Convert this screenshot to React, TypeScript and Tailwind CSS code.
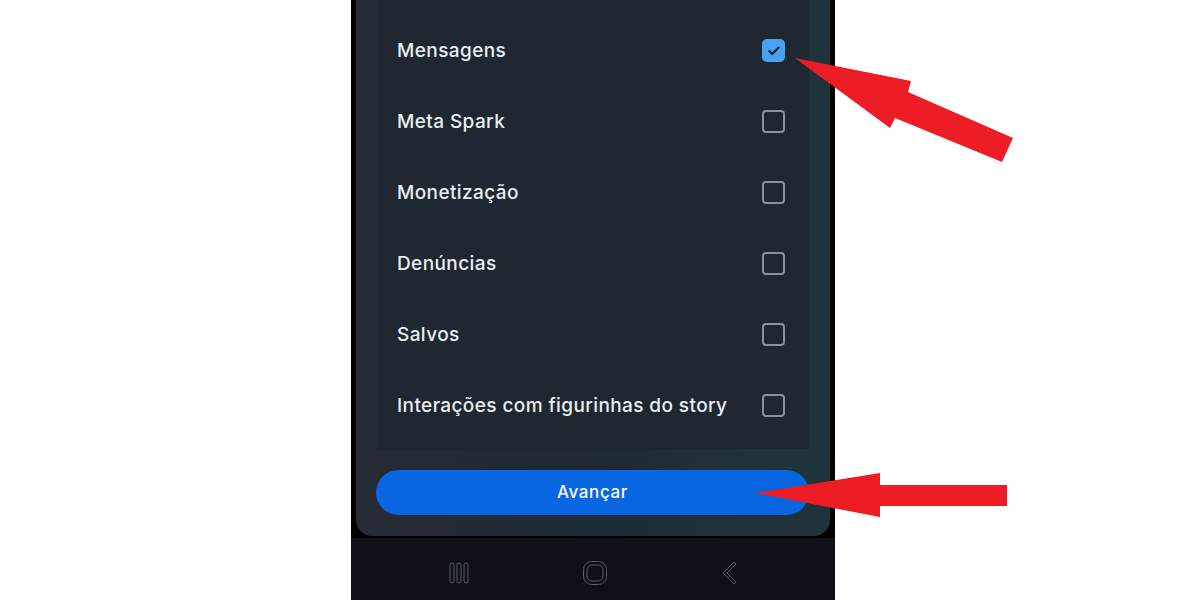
import { Check } from 'lucide-react'

const items = [
  { label: 'Mensagens', checked: true },
  { label: 'Meta Spark', checked: false },
  { label: 'Monetização', checked: false },
  { label: 'Denúncias', checked: false },
  { label: 'Salvos', checked: false },
  { label: 'Interações com figurinhas do story', checked: false },
]

function Checkbox({ checked }: { checked: boolean }) {
  if (checked) {
    return (
      <div className="w-[23px] h-[23px] rounded-[5px] bg-[#47a2f2] flex items-center justify-center">
        <Check className="w-[14px] h-[14px] text-[#16222e]" strokeWidth={3.5} />
      </div>
    )
  }
  return <div className="w-[23px] h-[23px] rounded-[4px] border-2 border-[#8b9197]" />
}

export default function App() {
  return (
    <div className="relative w-[1200px] h-[600px] bg-white overflow-hidden font-['Inter','Liberation_Sans',sans-serif]">
      <div className="ml-[351px] w-[484px] h-full bg-black flex flex-col">
        {/* cartão */}
        <div className="mx-[5px] h-[536px] rounded-b-[16px] bg-gradient-to-r from-[#262b34] via-[#1f2b36] to-[#20333a] px-[20px] flex flex-col">
          <div className="mx-[1px] h-[449px] bg-[#1f2831] pt-[15px]">
            {items.map((item) => (
              <div key={item.label} className="h-[71px] flex items-center justify-between pl-[20px] pr-[24px]">
                <span className="text-[19px] font-medium text-[#e9eef3] tracking-[0.4px] pt-[1px]">{item.label}</span>
                <Checkbox checked={item.checked} />
              </div>
            ))}
          </div>
          <button className="mt-[21px] h-[45px] w-[433px] rounded-full bg-[#0866e2] text-white text-[17px] font-medium tracking-[0.6px] pt-[1px]">
            Avançar
          </button>
        </div>

        {/* barra de navegação */}
        <div className="mt-[2px] flex-1 bg-[#0d1016] flex items-center justify-center gap-[110px] pt-[8px]">
          <svg width="24" height="24" viewBox="0 0 24 24" fill="none" stroke="#5a5f66" strokeWidth="1">
            <rect x="3" y="2" width="4" height="20" rx="2" />
            <rect x="10" y="2" width="4" height="20" rx="2" />
            <rect x="17" y="2" width="4" height="20" rx="2" />
          </svg>
          <svg width="28" height="28" viewBox="0 0 28 28" fill="none" stroke="#5a5f66" strokeWidth="1">
            <rect x="2.5" y="2.5" width="23" height="23" rx="8" />
            <rect x="6" y="6" width="16" height="16" rx="5" />
          </svg>
          <svg width="20" height="26" viewBox="0 0 20 26" fill="none" stroke="#5a5f66" strokeWidth="1">
            <path d="M15 2 L4 13 L15 24 L17 22 L8 13 L17 4 Z" strokeLinejoin="round" />
          </svg>
        </div>
      </div>

      {/* setas */}
      <svg className="absolute inset-0 pointer-events-none" width="1200" height="600" viewBox="0 0 1200 600">
        <polygon
          points="795,58 911,81 908,92 1013,138 1002,162 895,118 890,128"
          fill="#ec1d25"
        />
        <polygon
          points="755,493 880,473 880,485 1007,485 1007,506 880,506 880,517"
          fill="#ec1d25"
        />
      </svg>
    </div>
  )
}
